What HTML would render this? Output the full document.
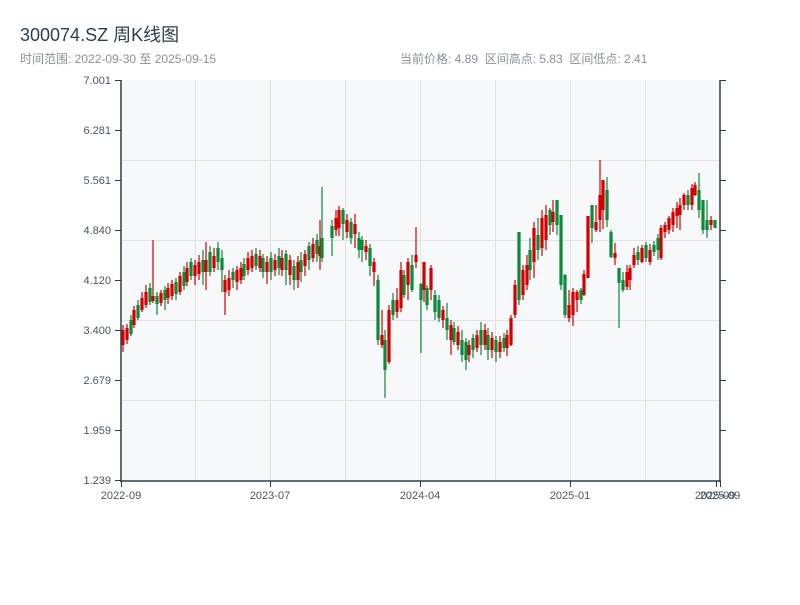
<!DOCTYPE html>
<html><head><meta charset="utf-8"><style>
body{margin:0;width:800px;height:600px;background:#fff;overflow:hidden;font-family:"Liberation Sans","Noto Sans CJK SC",sans-serif}
</style></head><body>
<svg width="800" height="600" xmlns="http://www.w3.org/2000/svg" font-family="Liberation Sans, Noto Sans CJK SC, sans-serif">
<text x="20" y="41" font-size="18" fill="#2c3e50">300074.SZ 周K线图</text>
<text x="20" y="63" font-size="12" fill="#8a8f99">时间范围: 2022-09-30 至 2025-09-15</text>
<text x="400" y="63" font-size="12" fill="#8a8f99">当前价格: 4.89&#160;&#160;区间高点: 5.83&#160;&#160;区间低点: 2.41</text>
<rect x="121" y="80" width="599" height="401" fill="#f6f8fa"/>
<g stroke="#dfe3e8" stroke-width="1">
<line x1="121" y1="160.5" x2="720" y2="160.5"/><line x1="121" y1="240.5" x2="720" y2="240.5"/>
<line x1="121" y1="320.5" x2="720" y2="320.5"/><line x1="121" y1="400.5" x2="720" y2="400.5"/>
<line x1="195.5" y1="80" x2="195.5" y2="481"/><line x1="270.5" y1="80" x2="270.5" y2="481"/>
<line x1="345.5" y1="80" x2="345.5" y2="481"/><line x1="420.5" y1="80" x2="420.5" y2="481"/>
<line x1="495.5" y1="80" x2="495.5" y2="481"/><line x1="570.5" y1="80" x2="570.5" y2="481"/>
<line x1="645.5" y1="80" x2="645.5" y2="481"/>
</g>
<path stroke="#d40000" stroke-width="1.2" fill="none" d="M123 325V352M127 324V344M134 306V328M142 292V312M146 285V308M153 240V303M161 290V306M168 283V304M172 280V300M180 272V295M187 262V286M195 260V285M199 255V280M206 242V290M214 248V272M225 275V315M229 270V296M237 266V290M241 262V284M248 252V275M252 250V272M260 250V272M267 256V284M275 254V276M282 250V276M290 255V285M298 256V288M305 250V276M313 238V262M320 220V270M336 210V236M339 206V236M347 214V238M355 214V248M366 240V260M374 258V286M382 310V348M389 305V364M397 288V318M401 262V312M408 258V300M416 227V268M424 262V302M431 265V300M443 306V328M451 320V355M458 326V350M469 340V362M477 330V352M485 324V350M492 332V358M500 336V358M507 330V356M511 315V346M515 280V318M523 265V300M527 255V290M534 222V278M542 210V256M546 205V250M553 200V232M569 290V322M573 288V326M577 290V312M584 270V296M588 216V278M596 205V232M600 160V232M603 180V229M615 243V265M627 265V290M630 265V290M634 248V268M642 245V263M650 244V265M661 225V260M665 222V238M669 216V234M673 208V232M677 202V228M680 198V230M684 193V210M692 184V210M695 182V196M711 216V230"/>
<path stroke="#d40000" stroke-width="3.2" fill="none" d="M123 330V345M127 328V340M134 310V325M142 298V310M146 292V305M153 296V301M161 293V303M168 288V298M172 284V296M180 276V292M187 268V282M195 265V276M199 262V274M206 260V272M214 256V268M225 280V292M229 278V290M237 270V282M241 268V280M248 258V270M252 256V268M260 256V268M267 262V272M275 260V270M282 258V270M290 260V275M298 262V280M305 254V266M313 244V258M320 246V256M336 218V230M339 210V228M347 220V232M355 224V234M366 246V252M374 262V272M382 335V345M389 310V362M397 300V312M401 270V308M408 262V285M416 255V262M424 262V290M431 268V290M443 310V320M451 325V340M458 332V345M469 345V355M477 335V348M485 330V345M492 338V350M500 342V352M507 335V348M511 318V345M515 285V315M523 270V295M527 265V285M534 228V262M542 218V248M546 215V240M553 212V222M569 305V318M573 292V315M577 292V300M584 274V295M588 216V278M596 222V230M600 195V220M603 180V210M615 253V258M627 272V287M630 268V280M634 255V265M642 248V262M650 250V262M661 228V258M665 225V232M669 218V230M673 212V225M677 208V216M680 205V215M684 195V205M692 188V205M695 185V195M711 220V225"/>
<path stroke="#0a8a3a" stroke-width="1.2" fill="none" d="M131 315V336M138 300V320M150 283V305M157 292V315M165 286V310M176 278V300M184 266V290M191 258V280M203 250V285M210 246V276M218 242V270M222 250V292M233 268V288M244 258V280M256 248V270M263 254V278M271 252V280M279 248V275M286 250V285M294 260V290M301 252V282M309 242V270M317 234V262M322 187V262M332 220V256M343 208V240M351 218V244M359 232V258M362 236V262M370 244V276M378 275V345M385 330V398M393 293V320M404 270V298M412 255V292M421 283V353M427 285V310M435 290V320M439 295V322M447 303V340M454 322V345M462 330V362M466 338V370M473 334V358M481 322V355M488 328V360M496 336V362M504 333V352M519 232V305M530 238V280M538 218V260M550 208V235M557 200V235M561 215V290M565 274V318M581 288V304M592 205V243M607 177V227M611 230V258M619 268V328M623 272V292M638 246V265M646 242V262M654 241V256M658 234V260M688 190V210M699 173V218M703 200V234M707 200V238M715 220V228"/>
<path stroke="#0a8a3a" stroke-width="3.2" fill="none" d="M131 320V334M138 305V318M150 288V302M157 296V304M165 290V300M176 282V294M184 272V286M191 262V276M203 260V272M210 252V272M218 248V262M222 258V270M233 272V280M244 264V276M256 254V266M263 258V272M271 258V272M279 256V268M286 254V270M294 266V280M301 260V272M309 246V260M317 240V254M322 238V258M332 226V238M343 210V224M351 222V238M359 238V250M362 240V250M370 248V266M378 280V340M385 340V370M393 300V315M404 275V295M412 265V290M421 284V300M427 288V305M435 295V312M439 300V318M447 318V330M454 328V342M462 340V355M466 342V360M473 338V350M481 330V345M488 335V350M496 340V352M504 338V348M519 232V300M530 250V270M538 235V250M550 210V225M557 200V225M561 215V285M565 275V315M581 290V300M592 205V228M607 190V220M611 232V257M619 268V283M623 280V290M638 252V260M646 245V258M654 245V252M658 238V250M688 195V205M699 190V210M703 200V230M707 220V230M715 220V228"/>
<g stroke="#2c3e50" stroke-width="1.5" fill="none">
<line x1="121" y1="80" x2="121" y2="482"/><line x1="120" y1="481" x2="721" y2="481"/>
<line x1="720" y1="80" x2="720" y2="482"/>
</g>
<g stroke="#2c3e50" stroke-width="1">
<line x1="115" y1="80.5" x2="121" y2="80.5"/><line x1="115" y1="130.5" x2="121" y2="130.5"/><line x1="115" y1="180.5" x2="121" y2="180.5"/><line x1="115" y1="230.5" x2="121" y2="230.5"/><line x1="115" y1="280.5" x2="121" y2="280.5"/><line x1="115" y1="330.5" x2="121" y2="330.5"/><line x1="115" y1="380.5" x2="121" y2="380.5"/><line x1="115" y1="430.5" x2="121" y2="430.5"/><line x1="115" y1="480.5" x2="121" y2="480.5"/>
<line x1="720" y1="80.5" x2="726" y2="80.5"/><line x1="720" y1="130.5" x2="726" y2="130.5"/><line x1="720" y1="180.5" x2="726" y2="180.5"/><line x1="720" y1="230.5" x2="726" y2="230.5"/><line x1="720" y1="280.5" x2="726" y2="280.5"/><line x1="720" y1="330.5" x2="726" y2="330.5"/><line x1="720" y1="380.5" x2="726" y2="380.5"/><line x1="720" y1="430.5" x2="726" y2="430.5"/>
<line x1="121.5" y1="481" x2="121.5" y2="487"/><line x1="270.5" y1="481" x2="270.5" y2="487"/><line x1="420.5" y1="481" x2="420.5" y2="487"/><line x1="570.5" y1="481" x2="570.5" y2="487"/><line x1="716.5" y1="481" x2="716.5" y2="487"/><line x1="720.5" y1="481" x2="720.5" y2="487"/>
</g>
<g font-size="11" fill="#4a5563" text-anchor="end">
<text x="111" y="84">7.001</text><text x="111" y="134">6.281</text><text x="111" y="184">5.561</text><text x="111" y="234">4.840</text><text x="111" y="284">4.120</text><text x="111" y="334">3.400</text><text x="111" y="384">2.679</text><text x="111" y="434">1.959</text><text x="111" y="484">1.239</text>
</g>
<g font-size="11" fill="#4a5563" text-anchor="middle">
<text x="121" y="499">2022-09</text><text x="270" y="499">2023-07</text><text x="420" y="499">2024-04</text><text x="570" y="499">2025-01</text><text x="715" y="499">2025-09</text><text x="720" y="499">2025-09</text>
</g>
</svg>
</body></html>
